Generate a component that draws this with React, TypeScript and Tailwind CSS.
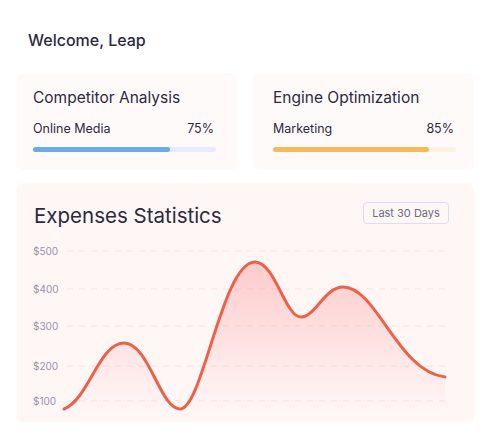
import React from 'react';

const font = { fontFamily: 'Inter, "Noto Sans", sans-serif' };

interface ProgressCardProps {
  title: string;
  label: string;
  value: number;
  fill: string;
  track: string;
  pad: string;
}

const ProgressCard: React.FC<ProgressCardProps> = ({ title, label, value, fill, track, pad }) => (
  <div className={`flex-1 rounded-md bg-[#fffafa] pt-[13px] pb-[18px] ${pad}`}>
    <h3 className="text-[15.5px] leading-6 text-[#2b2a3f]">{title}</h3>
    <div className="mt-[11px] flex items-center justify-between text-[12.5px] leading-4 text-[#2b2a3f]">
      <span>{label}</span>
      <span className="pr-[2px]">{value}%</span>
    </div>
    <div className={`mt-[10px] h-[5px] w-full rounded-full ${track}`}>
      <div className={`h-full rounded-full ${fill}`} style={{ width: `${value}%` }} />
    </div>
  </div>
);

const gridLines = [
  { label: '$500', y: 15 },
  { label: '$400', y: 53 },
  { label: '$300', y: 90 },
  { label: '$200', y: 130 },
  { label: '$100', y: 165 },
];

const curve =
  'M47,173 C72,163 82,107 107,107 C132,107 143,173 163,173 C186,173 205,26 238,26 C258,26 268,81 284,81 C298,81 308,51 326,51 C360,51 380,135 428,141';

const ExpensesChart = () => (
  <div className="relative mt-[6px] h-[186px] w-full">
    {gridLines.map((g) => (
      <span
        key={g.label}
        className="absolute left-4 text-[10px] leading-3 text-[#9794aa]"
        style={{ top: g.y - 6 }}
      >
        {g.label}
      </span>
    ))}
    <svg className="absolute inset-0" width="457" height="186" viewBox="0 0 457 186">
      <defs>
        <linearGradient id="area" x1="0" y1="0" x2="0" y2="1">
          <stop offset="0%" stopColor="#f87171" stopOpacity="0.32" />
          <stop offset="100%" stopColor="#f87171" stopOpacity="0" />
        </linearGradient>
      </defs>
      {gridLines.map((g) => (
        <line
          key={g.label}
          x1="50"
          x2="431"
          y1={g.y}
          y2={g.y}
          stroke="#f7e3e3"
          strokeWidth="1"
          strokeDasharray="6 6"
        />
      ))}
      <path d={`${curve} L428,176 L47,176 Z`} fill="url(#area)" />
      <path d={curve} fill="none" stroke="#ee6149" strokeWidth="3" strokeLinecap="round" />
    </svg>
  </div>
);

export default function App() {
  return (
    <div className="h-[444px] w-[495px] bg-white pl-[17px] pr-[21px] pt-[28px]" style={font}>
      <h1 className="pl-[11px] text-[16px] font-medium leading-6 text-[#2b2a3f]">Welcome, Leap</h1>

      <div className="mt-[21px] flex gap-4">
        <ProgressCard
          title="Competitor Analysis"
          label="Online Media"
          value={75}
          fill="bg-[#6ba9ef]"
          track="bg-[#e9ebfc]"
          pad="pl-4 pr-[21px]"
        />
        <ProgressCard
          title="Engine Optimization"
          label="Marketing"
          value={85}
          fill="bg-[#f9b95b]"
          track="bg-[#fdf1e2]"
          pad="pl-5 pr-[18px]"
        />
      </div>

      <div className="mt-[13px] h-[239px] rounded-md bg-[#fff6f6]">
        <div className="flex items-start justify-between pl-[17px] pr-[25px] pt-[19px]">
          <h2 className="text-[20.5px] leading-7 text-[#2b2a3f]">Expenses Statistics</h2>
          <button className="flex h-[22px] w-[86px] items-center justify-center rounded border border-[#dedcf2] text-[11px] text-[#6d6b80]">
            Last 30 Days
          </button>
        </div>
        <ExpensesChart />
      </div>
    </div>
  );
}
